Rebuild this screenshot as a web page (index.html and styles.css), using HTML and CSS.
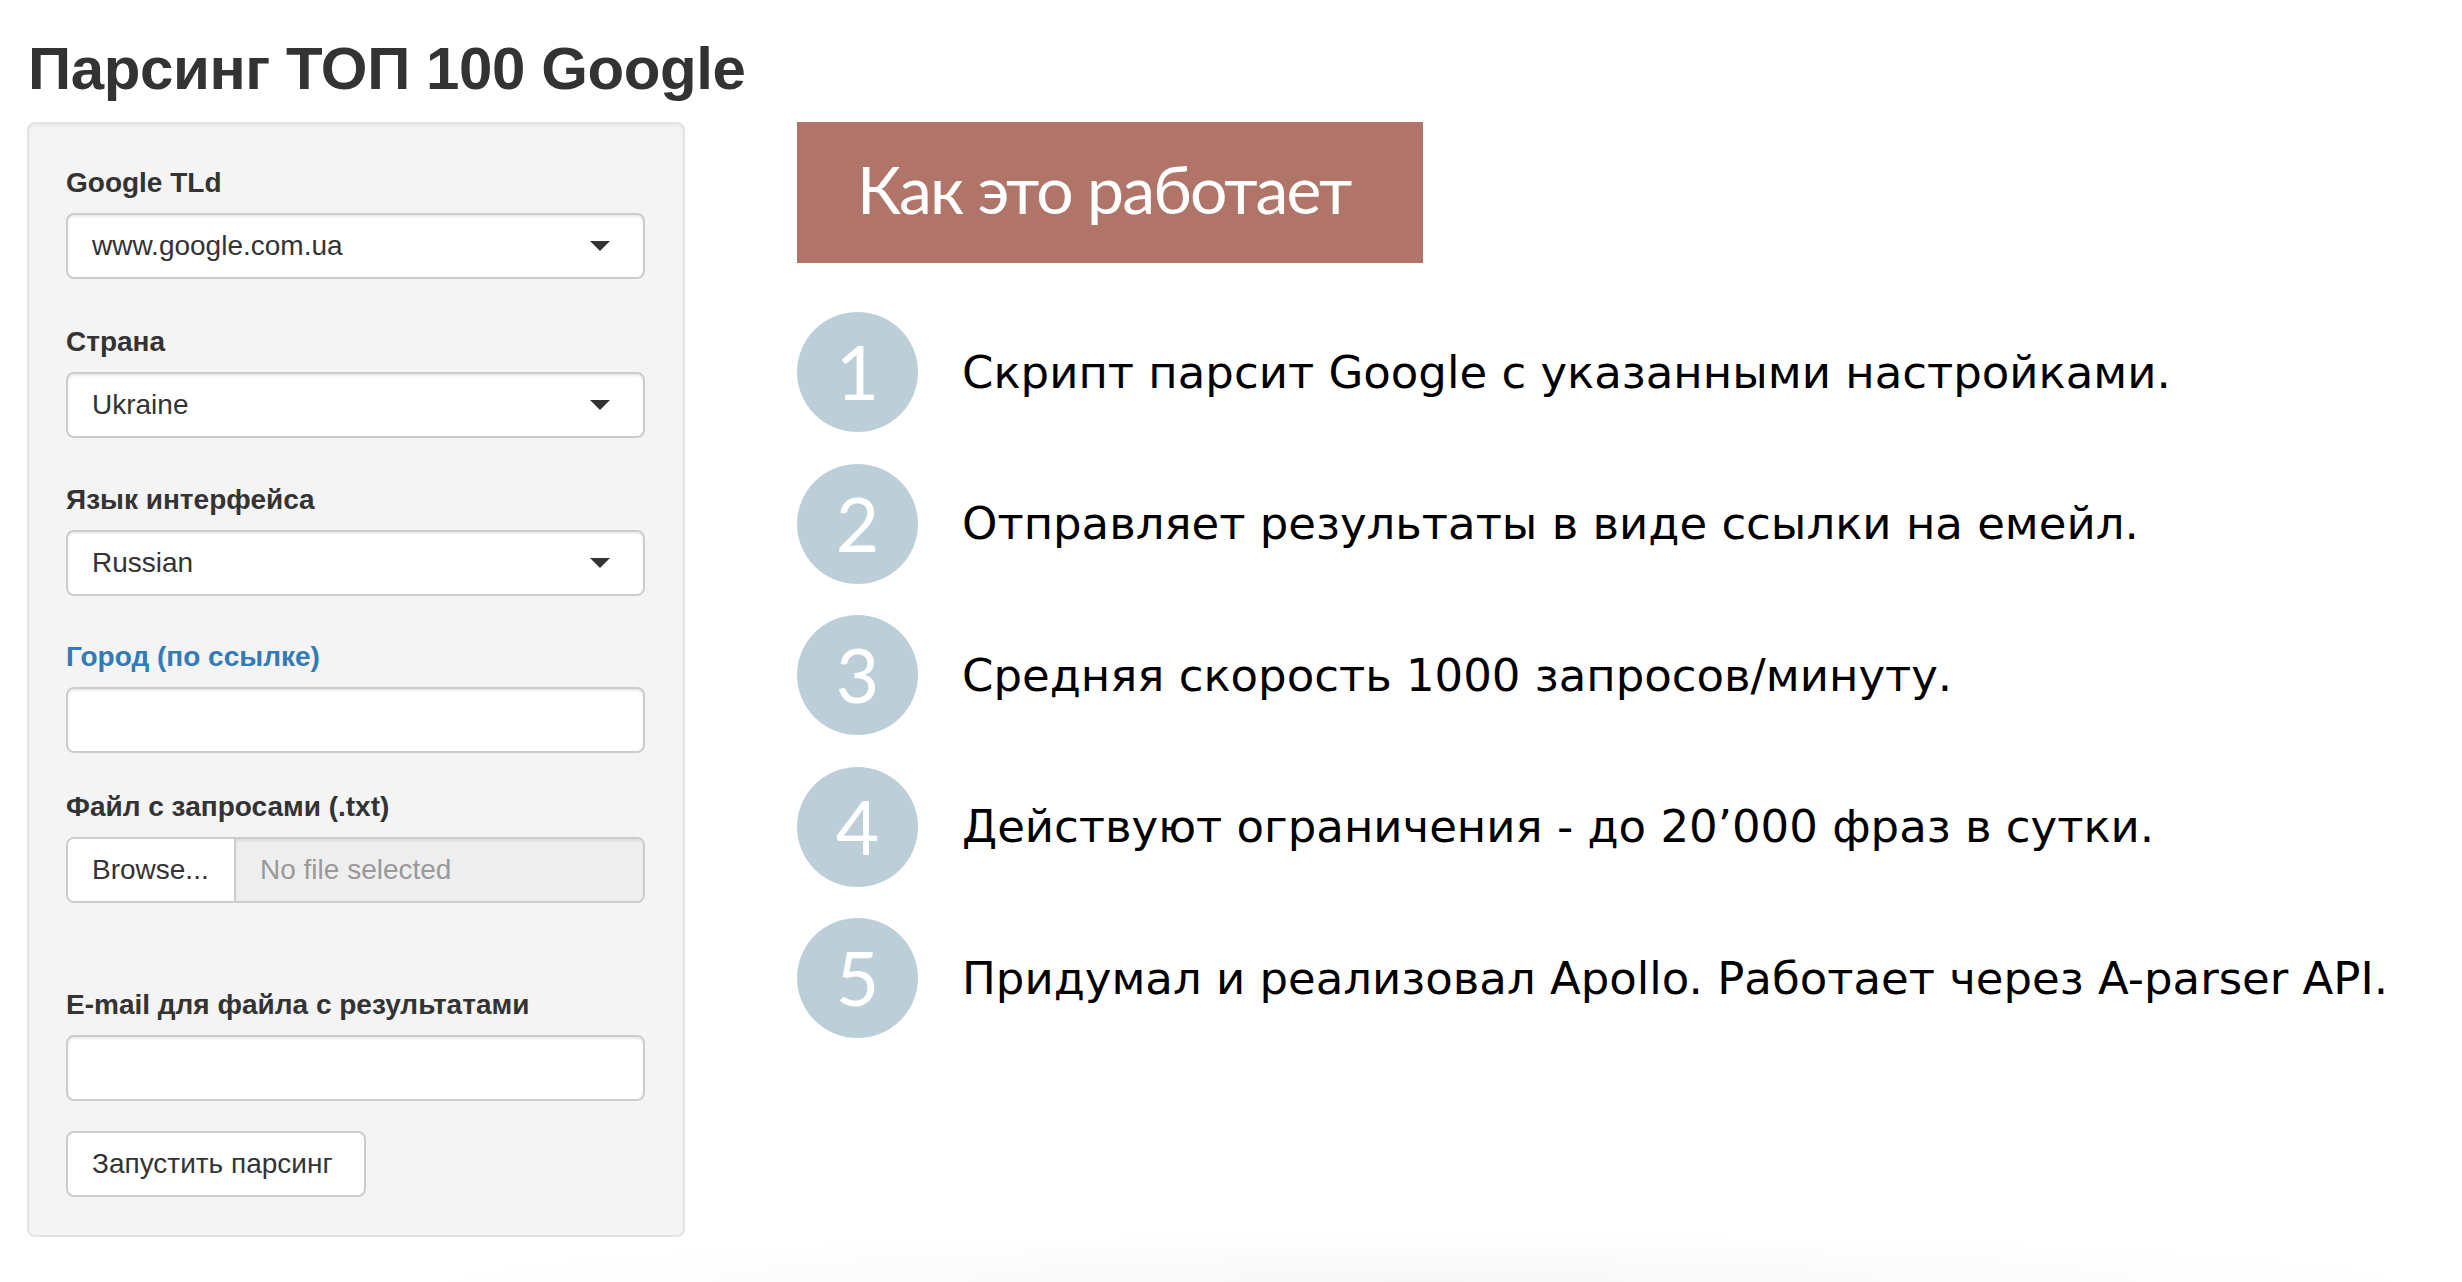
FILE: index.html
```html
<!DOCTYPE html>
<html lang="ru">
<head>
<meta charset="utf-8">
<title>Парсинг ТОП 100 Google</title>
<link rel="stylesheet" href="styles.css">
</head>
<body>
<div class="page">
  <h2 class="title">Парсинг ТОП 100 Google</h2>
  <div class="row">
    <div class="well">
      <div class="group g1">
        <label class="lbl">Google TLd</label>
        <div class="select"><span>www.google.com.ua</span><i class="caret"></i></div>
      </div>
      <div class="group g2">
        <label class="lbl">Страна</label>
        <div class="select"><span>Ukraine</span><i class="caret"></i></div>
      </div>
      <div class="group g3">
        <label class="lbl">Язык интерфейса</label>
        <div class="select"><span>Russian</span><i class="caret"></i></div>
      </div>
      <div class="group g4">
        <label class="lbl link">Город (по ссылке)</label>
        <div class="input"></div>
      </div>
      <div class="group g5">
        <label class="lbl">Файл с запросами (.txt)</label>
        <div class="file">
          <div class="browse">Browse...</div>
          <div class="fname">No file selected</div>
        </div>
      </div>
      <div class="group g6">
        <label class="lbl">E-mail для файла с результатами</label>
        <div class="input"></div>
      </div>
      <div class="btn">Запустить парсинг</div>
    </div>
    <div class="main">
      <div class="banner">Как это работает</div>
      <ul class="steps">
        <li class="step"><span class="num">1</span><span class="txt">Скрипт парсит Google с указанными настройками.</span></li>
        <li class="step"><span class="num">2</span><span class="txt">Отправляет результаты в виде ссылки на емейл.</span></li>
        <li class="step"><span class="num">3</span><span class="txt">Средняя скорость 1000 запросов/минуту.</span></li>
        <li class="step"><span class="num">4</span><span class="txt">Действуют ограничения - до 20’000 фраз в сутки.</span></li>
        <li class="step"><span class="num">5</span><span class="txt">Придумал и реализовал Apollo. Работает через A-parser API.</span></li>
      </ul>
    </div>
  </div>
  <div class="shade"></div>
</div>
</body>
</html>
```
FILE: styles.css
```css
html, body {
  margin: 0;
  padding: 0;
  background: #fff;
}
body {
  font-family: "Liberation Sans", Arial, sans-serif;
  color: #333;
  overflow: hidden;
  height: 1282px;
}
.page {
  padding-left: 27px;
}
.title {
  margin: 36px 0 20px 1px;
  font-size: 60px;
  line-height: 66px;
  font-weight: bold;
  color: #333;
  letter-spacing: -0.4px;
}
.row {
  display: flex;
  align-items: flex-start;
}
.well {
  width: 579px;
  padding: 39px 38px 38px 37px;
  background: #f4f4f4;
  border: 2px solid #e3e3e3;
  border-radius: 8px;
  box-shadow: inset 0 2px 2px rgba(0,0,0,0.05);
}
.group {
  display: flex;
  flex-direction: column;
}
.g1 { margin-bottom: 43px; }
.g2 { margin-bottom: 42px; }
.g3 { margin-bottom: 41px; }
.g4 { margin-bottom: 34px; }
.g5 { margin-bottom: 82px; }
.g6 { margin-bottom: 30px; }
.lbl {
  display: block;
  font-size: 28px;
  line-height: 40px;
  font-weight: bold;
  margin-bottom: 10px;
  color: #333;
}
.lbl.link {
  color: #337ab7;
}
.select, .input, .file, .btn {
  box-sizing: border-box;
  height: 66px;
  border: 2px solid #ccc;
  border-radius: 8px;
  background: #fff;
  font-size: 28px;
  color: #333;
}
.select {
  display: flex;
  align-items: center;
  justify-content: space-between;
  padding: 0 33px 0 24px;
  box-shadow: inset 0 2px 2px rgba(0,0,0,0.08);
}
.caret {
  width: 0;
  height: 0;
  border-style: solid;
  border-width: 10px 10px 0 10px;
  border-color: #333 transparent transparent transparent;
}
.input {
  box-shadow: inset 0 2px 2px rgba(0,0,0,0.075);
}
.file {
  display: flex;
  overflow: hidden;
}
.browse {
  display: flex;
  align-items: center;
  width: 142px;
  padding-left: 24px;
  border-right: 2px solid #ccc;
  background: #fff;
}
.fname {
  flex: 1;
  display: flex;
  align-items: center;
  padding-left: 24px;
  background: #eee;
  color: #999;
  box-shadow: inset 0 2px 2px rgba(0,0,0,0.075);
}
.btn {
  width: 300px;
  display: flex;
  align-items: center;
  padding-left: 24px;
}
.main {
  margin-left: 112px;
  display: flex;
  flex-direction: column;
}
.banner {
  box-sizing: border-box;
  width: 626px;
  height: 141px;
  background: #b07568;
  color: #fff;
  font-family: Lato, "Open Sans", sans-serif;
  font-size: 66px;
  letter-spacing: -1.8px;
  display: flex;
  align-items: center;
  padding: 0 0 8px 60px;
}
.steps {
  list-style: none;
  margin: 49px 0 0 0;
  padding: 0;
  display: flex;
  flex-direction: column;
  gap: 31.5px;
}
.step {
  display: flex;
  align-items: center;
}
.num {
  flex: none;
  width: 121px;
  height: 120px;
  border-radius: 50%;
  background: #bccfd8;
  color: #fff;
  font-family: Lato, "Open Sans", sans-serif;
  font-size: 75px;
  display: flex;
  align-items: center;
  justify-content: center;
  padding-bottom: 2px;
  box-sizing: border-box;
}
.txt {
  margin-left: 44px;
  font-family: "DejaVu Sans", Verdana, sans-serif;
  font-size: 45px;
  color: #000;
  white-space: nowrap;
}
.shade {
  height: 52px;
  margin: -7px 38px 0 397px;
  background: radial-gradient(ellipse 52% 100% at 50% 100%, rgba(0,0,0,0.03), rgba(0,0,0,0) 100%);
}
```
